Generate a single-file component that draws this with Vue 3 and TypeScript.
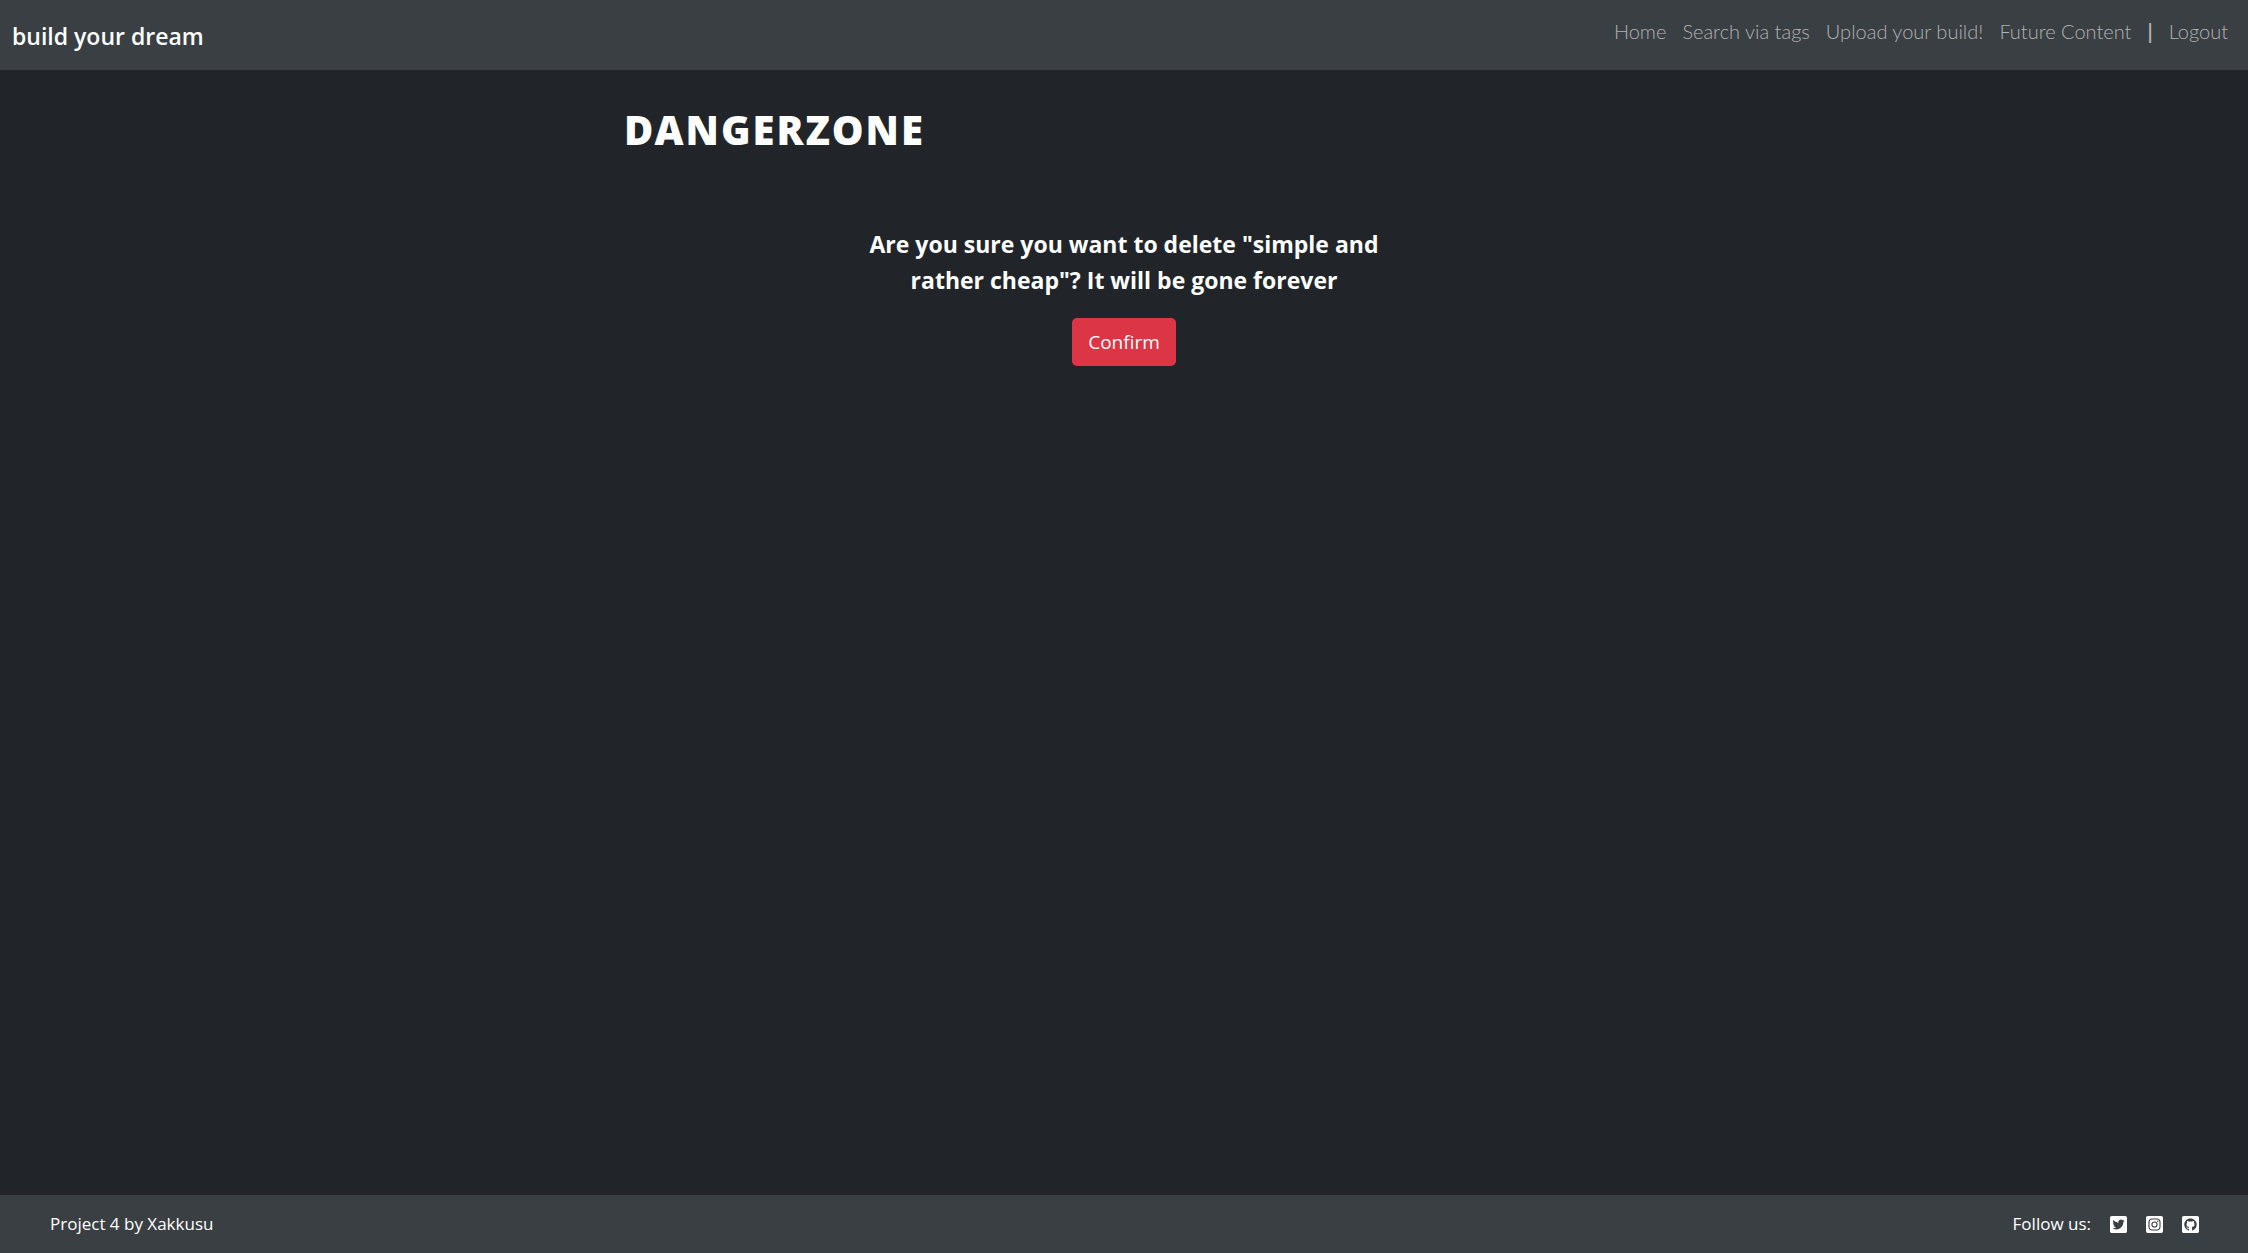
<script setup lang="ts">
interface NavLink {
  label: string
  href: string
}

interface SocialLink {
  name: string
  href: string
  path: string
}

const links: NavLink[] = [
  { label: 'Home', href: '#home' },
  { label: 'Search via tags', href: '#tags' },
  { label: 'Upload your build!', href: '#upload' },
  { label: 'Future Content', href: '#future' },
]

const buildTitle = 'simple and rather cheap'

const socials: SocialLink[] = [
  {
    name: 'Twitter',
    href: '#twitter',
    path: 'M400 32H48C21.5 32 0 53.5 0 80v352c0 26.5 21.5 48 48 48h352c26.5 0 48-21.5 48-48V80c0-26.5-21.5-48-48-48zm-48.9 158.8c.2 2.8.2 5.7.2 8.5 0 86.7-66 186.6-186.6 186.6-37.2 0-71.7-10.8-100.7-29.4 5.3.6 10.4.8 15.8.8 30.7 0 58.9-10.4 81.4-28-28.8-.6-53-19.5-61.3-45.5 10.1 1.5 19.2 1.5 29.6-1.2-30-6.1-52.5-32.5-52.5-64.4v-.8c8.7 4.9 18.9 7.9 29.6 8.3a65.447 65.447 0 0 1-29.2-54.6c0-12.2 3.2-23.4 8.9-33.1 32.3 39.8 80.8 65.8 135.2 68.6-9.3-44.5 24-80.6 64-80.6 18.9 0 35.9 7.9 47.9 20.7 14.8-2.8 29-8.3 41.6-15.8-4.9 15.2-15.2 28-28.8 36.1 13.2-1.4 26-5.1 37.8-10.2-8.9 13.1-20.1 24.7-32.9 34z',
  },
  {
    name: 'Instagram',
    href: '#instagram',
    path: 'M224,202.66A53.34,53.34,0,1,0,277.36,256,53.38,53.38,0,0,0,224,202.66Zm124.71-41a54,54,0,0,0-30.41-30.41c-21-8.29-71-6.43-94.3-6.43s-73.25-1.93-94.31,6.43a54,54,0,0,0-30.41,30.41c-8.28,21-6.43,71.05-6.43,94.33S91,329.26,99.32,350.33a54,54,0,0,0,30.41,30.41c21,8.29,71,6.43,94.31,6.43s73.24,1.93,94.3-6.43a54,54,0,0,0,30.41-30.41c8.35-21,6.43-71.05,6.43-94.33S357.1,182.74,348.75,161.67ZM224,338a82,82,0,1,1,82-82A81.9,81.9,0,0,1,224,338Zm85.38-148.3a19.14,19.14,0,1,1,19.13-19.14A19.1,19.1,0,0,1,309.42,189.74ZM400,32H48A48,48,0,0,0,0,80V432a48,48,0,0,0,48,48H400a48,48,0,0,0,48-48V80A48,48,0,0,0,400,32ZM382.88,322c-1.29,25.63-7.14,48.34-25.85,67s-41.4,24.63-67,25.85c-26.41,1.49-105.59,1.49-132,0-25.63-1.29-48.26-7.15-67-25.85s-24.63-41.42-25.85-67c-1.49-26.42-1.49-105.61,0-132,1.29-25.63,7.07-48.34,25.85-67s41.47-24.56,67-25.78c26.41-1.49,105.59-1.49,132,0,25.63,1.29,48.33,7.15,67,25.85s24.63,41.42,25.85,67.05C384.37,216.44,384.37,295.56,382.88,322Z',
  },
  {
    name: 'GitHub',
    href: '#github',
    path: 'M400 32H48C21.5 32 0 53.5 0 80v352c0 26.5 21.5 48 48 48h352c26.5 0 48-21.5 48-48V80c0-26.5-21.5-48-48-48zM277.3 415.7c-8.4 1.5-11.5-3.7-11.5-8 0-5.4.2-33 .2-55.3 0-15.6-5.2-25.5-11.3-30.7 37-4.1 76-9.2 76-73.1 0-18.2-6.5-27.3-17.1-39 1.7-4.3 7.4-22-1.7-45-13.9-4.3-45.7 17.9-45.7 17.9-13.2-3.7-27.5-5.6-41.6-5.6-14.1 0-28.4 1.9-41.6 5.6 0 0-31.8-22.2-45.7-17.9-9.1 22.9-3.5 40.6-1.7 45-10.6 11.7-15.6 20.8-15.6 39 0 63.6 37.3 69 74.3 73.1-4.8 4.3-9.1 11.7-10.6 22.3-9.5 4.3-33.8 11.7-48.3-13.9-9.1-15.8-25.5-17.1-25.5-17.1-16.2-.2-1.1 10.2-1.1 10.2 10.8 5 18.4 24.2 18.4 24.2 9.7 29.7 56.1 19.7 56.1 19.7 0 13.9.2 36.5.2 40.6 0 4.3-3 9.5-11.5 8-66-22.1-112.2-84.9-112.2-158.3 0-91.8 70.2-161.5 162-161.5S388 165.6 388 257.4c.1 73.4-44.7 136.3-110.7 158.3z',
  },
]
</script>

<template>
  <div class="page">
    <header class="topbar">
      <a class="brand" href="#home">build your dream</a>
      <nav class="nav" aria-label="Main">
        <a v-for="link in links" :key="link.href" class="nav-link" :href="link.href">{{ link.label }}</a>
        <span class="divider">|</span>
        <a class="nav-link" href="#logout">Logout</a>
      </nav>
    </header>

    <main class="content">
      <h1 class="title">DANGERZONE</h1>
      <form class="confirm" @submit.prevent>
        <p class="question">Are you sure you want to delete "{{ buildTitle }}"? It will be gone forever</p>
        <button class="btn-danger" type="submit">Confirm</button>
      </form>
    </main>

    <footer class="footer">
      <span>Project 4 by Xakkusu</span>
      <div class="social">
        <span>Follow us:</span>
        <a v-for="item in socials" :key="item.name" class="social-link" :href="item.href" :aria-label="item.name">
          <svg class="icon" viewBox="0 32 448 448" aria-hidden="true"><path :d="item.path" /></svg>
        </a>
      </div>
    </footer>
  </div>
</template>

<style>
body {
  background: #212529;
}
</style>

<style scoped>
.page {
  display: flex;
  flex-direction: column;
  min-height: 100vh;
  background: #212529;
  color: #fff;
  font-family: "Segoe UI", "Open Sans", "Noto Sans", sans-serif;
}

.topbar {
  display: flex;
  justify-content: space-between;
  align-items: flex-start;
  box-sizing: border-box;
  min-height: 70px;
  padding: 16px 20px 14px 12px;
  background: #3a3f43;
}

.brand {
  color: #fff;
  font-size: 23px;
  font-weight: 600;
  line-height: 40px;
  text-decoration: none;
}

.nav {
  display: flex;
  gap: 16px;
  font-family: Lato, sans-serif;
  font-size: 20px;
  font-weight: 300;
  line-height: 30px;
}

.nav-link {
  color: #b0b2b4;
  text-decoration: none;
}

.divider {
  color: #b0b2b4;
  font-weight: 700;
}

.content {
  flex: 1;
  box-sizing: border-box;
  width: 100%;
  max-width: 1000px;
  margin: 0 auto;
  padding-top: 35px;
}

.title {
  margin: 0;
  font-family: "Noto Sans", "Open Sans", sans-serif;
  font-size: 40px;
  font-weight: 900;
  line-height: 50px;
  letter-spacing: 2px;
}

.confirm {
  display: flex;
  flex-direction: column;
  align-items: center;
  gap: 20px;
  padding-top: 71px;
}

.question {
  max-width: 530px;
  margin: 0;
  font-size: 23px;
  font-weight: 700;
  line-height: 36px;
  text-align: center;
}

.btn-danger {
  padding: 9px 16px;
  border: 0;
  border-radius: 5px;
  background: #dc3545;
  color: #fff;
  font: inherit;
  font-size: 19px;
  line-height: 30px;
}

.footer {
  display: flex;
  justify-content: space-between;
  align-items: center;
  padding: 14px 49px 14px 50px;
  background: #3a3f43;
  font-size: 17px;
  line-height: 30px;
}

.social {
  display: flex;
  align-items: center;
  gap: 19px;
}

.social-link {
  display: flex;
  color: #fff;
}

.icon {
  width: 17px;
  height: 17px;
  fill: currentColor;
}
</style>
